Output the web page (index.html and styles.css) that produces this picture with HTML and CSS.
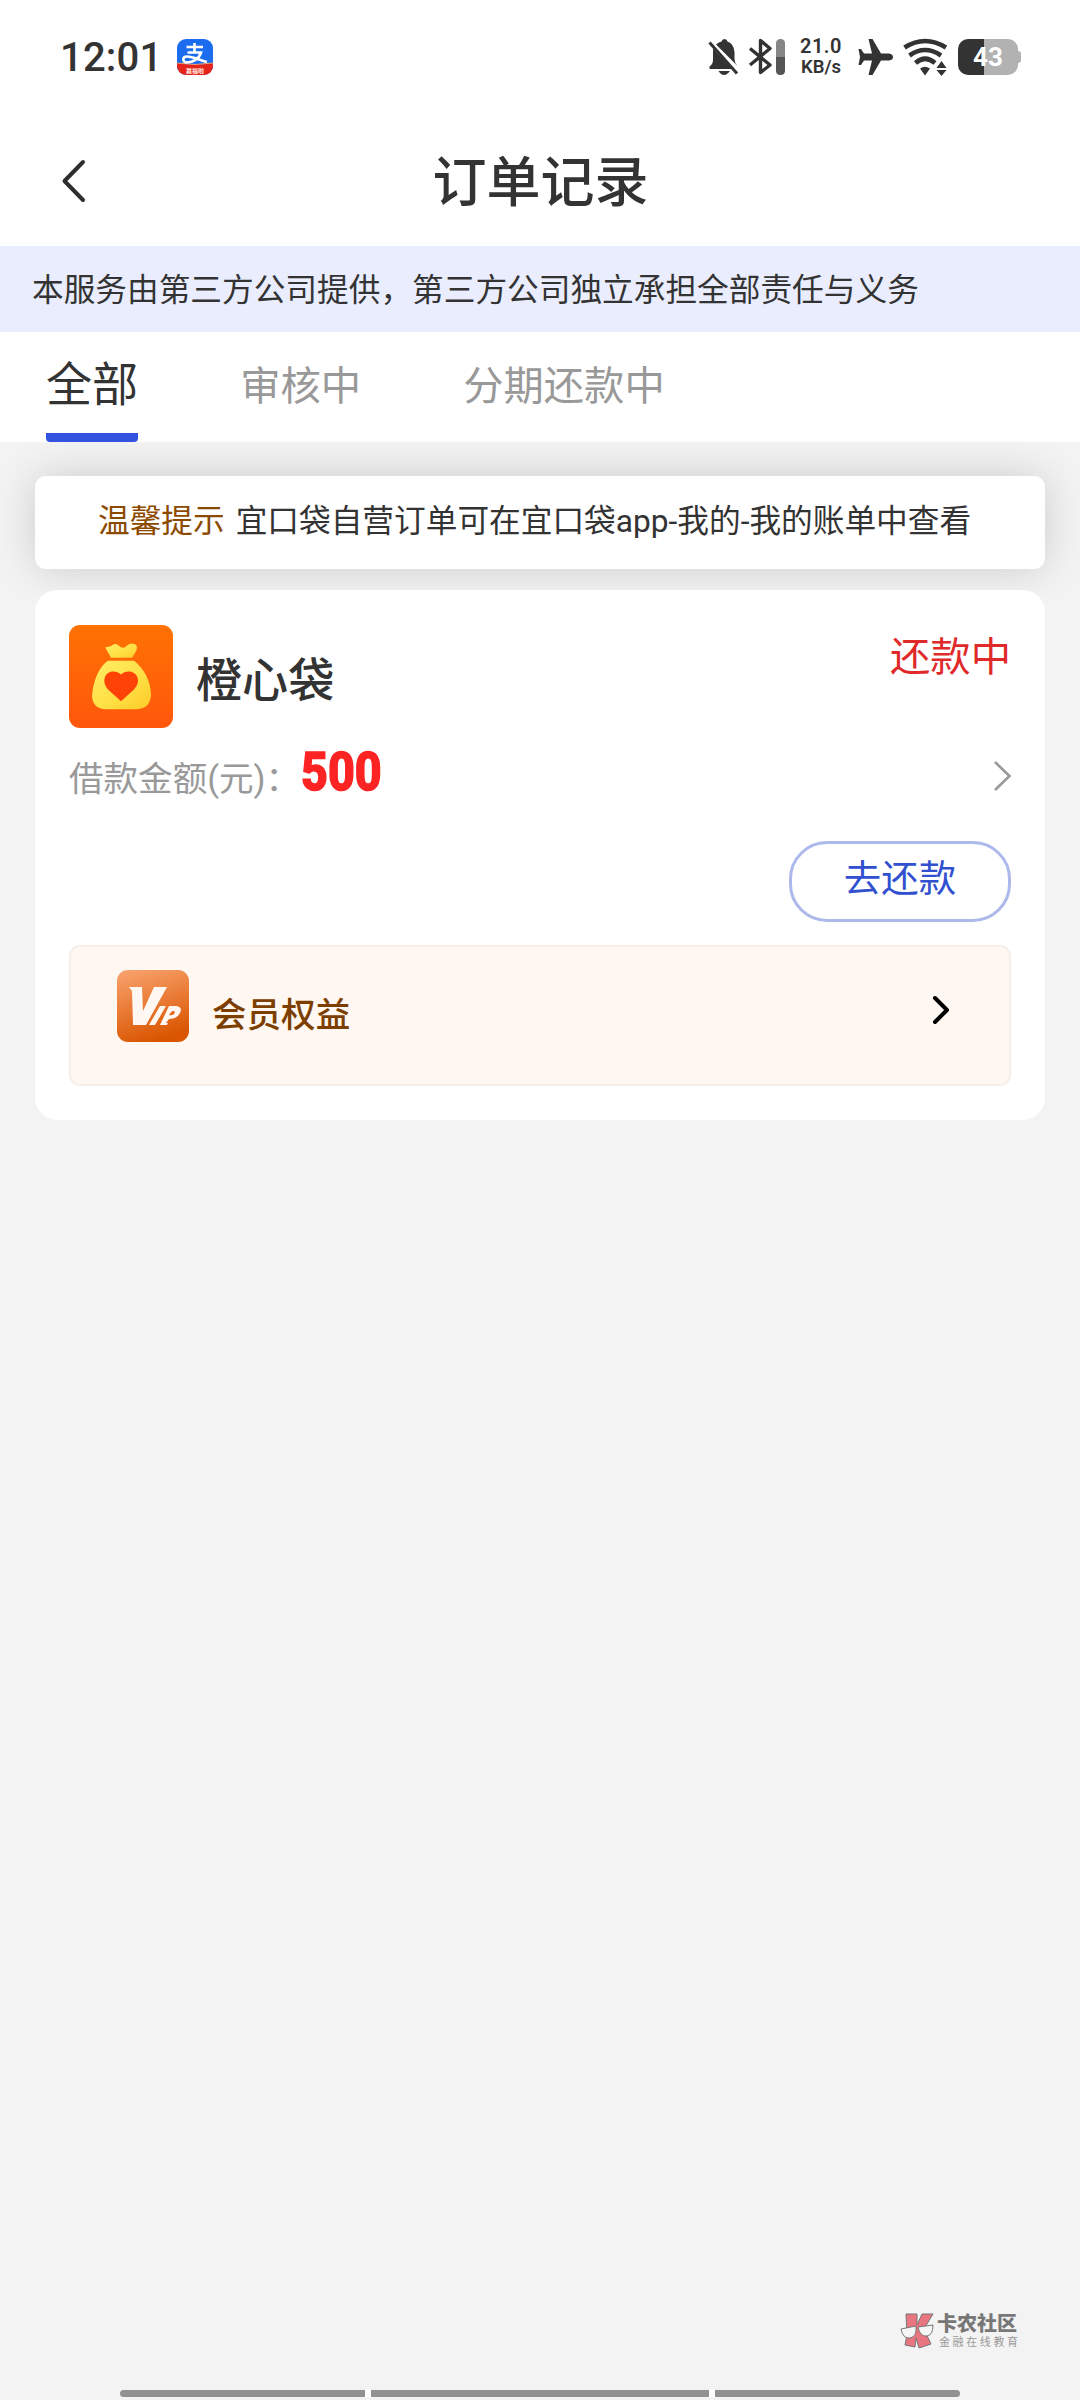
FILE: index.html
```html
<!DOCTYPE html>
<html lang="zh-CN">
<head>
<meta charset="utf-8">
<title>订单记录</title>
<link rel="stylesheet" href="styles.css">
</head>
<body>
<header class="status">
  <span class="clock">12:01</span>
  <svg class="app-badge" width="36" height="36" viewBox="0 0 36 36">
    <defs><clipPath id="badge"><rect width="36" height="36" rx="9"/></clipPath></defs>
    <g clip-path="url(#badge)">
      <rect width="36" height="36" fill="#1c6cf0"/>
      <path d="M0 24 Q18 27 36 24 V36 H0Z" fill="#e6241c"/>
      <path d="M0 24 Q18 27 36 24" fill="none" stroke="#f3a06a" stroke-width="1"/>
      <path d="M9.500 8H26M17.500 4V13M10.500 13.500H24C22 20 16 23.500 10 23.500C5 23.500 5 17.500 10 17.500C16 17.500 22 21 30 23" fill="none" stroke="#fff" stroke-width="2.600"/>
    </g>
    <text x="18" y="33.500" class="badge-text">赢福啦</text>
  </svg>
  <div class="status-icons">
    <svg width="32" height="38" viewBox="0 0 32 38" fill="#333">
      <path d="M8 6.500Q11 4 13.500 3.500Q14 1 16.500 1Q19 1 19.500 3.500Q26 6 26.500 14V21Q26.500 25 29.500 28ZM5 10.500L24 31H1.500V28.500Q5 26 5 22ZM10.500 33H22Q19 37 16 37Q13 37 10.500 33Z"/>
      <path d="M1.500 4.500L29 35.500" stroke="#333" stroke-width="3"/>
    </svg>
    <svg class="bluetooth" width="38" height="38" viewBox="0 0 38 38">
      <path d="M2 10.500L22 27L12.500 34.500V2.500L22 10.500L2 27" fill="none" stroke="#333" stroke-width="3.400" stroke-linejoin="round"/>
      <path d="M28 5.500Q28 1 32.500 1Q37 1 37 5.500V19H28Z" fill="#858585"/>
      <path d="M28 19H37V32.500Q37 37 32.500 37Q28 37 28 32.500Z" fill="#555"/>
    </svg>
    <div class="speed"><span>21.0</span><span>KB/s</span></div>
    <svg class="plane" width="36" height="38" viewBox="0 0 36 38">
      <path d="M11.500 1H15.500L24 15.500H32Q36 16 36 19Q36 22 32 22.500H24L15.500 37H11.500L15 22.500H7L4 27H1.500L3 19L1.500 11H4L7 15.500H15Z" fill="#333"/>
    </svg>
    <svg class="wifi" width="45" height="38" viewBox="0 0 45 38">
      <g fill="none" stroke="#333" stroke-width="4.600">
        <path d="M1.500 9.500Q22 -3.500 43 9.500"/><path d="M6.500 17.500Q22 6.500 38 17.500"/><path d="M12.500 25Q22 16.500 32 25"/>
      </g>
      <path d="M17 30.500Q22 27 27 30.500L22 37.500ZM33.500 30L38.500 23L43.500 30ZM33.500 32H43.500L38.500 38Z" fill="#333"/>
    </svg>
    <div class="battery"><span>43</span></div>
  </div>
</header>
<nav class="titlebar">
  <svg width="30" height="44" viewBox="0 0 30 44"><path d="M25 3L6.500 22L25 41" fill="none" stroke="#2e2e2e" stroke-width="4" stroke-linecap="round" stroke-linejoin="round"/></svg>
  <h1>订单记录</h1>
</nav>
<p class="notice">本服务由第三方公司提供，第三方公司独立承担全部责任与义务</p>
<div class="tabs">
  <span class="tab active">全部</span>
  <span class="tab">审核中</span>
  <span class="tab">分期还款中</span>
</div>
<main class="content">
  <section class="tip"><b>温馨提示</b><span>宜口袋自营订单可在宜口袋app-我的-我的账单中查看</span></section>
  <article class="order">
    <div class="order-head">
      <svg width="104" height="103" viewBox="0 0 104 104" preserveAspectRatio="none">
        <defs>
          <linearGradient id="orange" x2="0" y2="1"><stop stop-color="#ff7203"/><stop offset="1" stop-color="#ff570c"/></linearGradient>
          <linearGradient id="gold" x1="0" x2="1" y1="0" y2="1"><stop stop-color="#ffec66"/><stop offset=".6" stop-color="#ffdf42"/><stop offset="1" stop-color="#ffc928"/></linearGradient>
        </defs>
        <rect width="104" height="104" rx="11" fill="url(#orange)"/>
        <path d="M42 33L37 24Q35 22 39 22Q42 22 44 20Q47 18 50 21Q53 24 56 22.500Q59 20 61 19Q68 18 68 23Q68 26 63 33Z" fill="url(#gold)"/>
        <path d="M39 36H65C74 43 82 56 82 71Q81 85 67 85H37Q24 85 23 72C24 55 31 41 39 36Z" fill="url(#gold)"/>
        <path d="M52 77L39 65C32 57 36 47 44 47Q49 47 52 50Q55 47 60 47C68 47 73 57 65 65Z" fill="#ff4206"/>
      </svg>
      <h2>橙心袋</h2>
      <span class="state">还款中</span>
    </div>
    <div class="amount">
      <span class="label">借款金额(元)：</span><strong>500</strong>
      <svg width="20" height="32" viewBox="0 0 20 32"><path d="M3 2L17.500 16L3 30" fill="none" stroke="#999" stroke-width="2.600"/></svg>
    </div>
    <div class="actions"><button class="repay">去还款</button></div>
    <div class="vip">
      <svg width="72" height="72" viewBox="0 0 72 72">
        <defs><linearGradient id="copper" x1=".2" x2=".5" y2="1"><stop stop-color="#f8a06a"/><stop offset="1" stop-color="#d95500"/></linearGradient></defs>
        <rect width="72" height="72" rx="11" fill="url(#copper)"/>
        <path d="M12 17H25L26 41L37 17H50L29 55H16L15 21Z" fill="#fff8f2"/>
        <path d="M43 36H49L38 55H32ZM52 36H59Q66 37 63 43Q60 49 52 49L49 53H51L50 55H43ZM55 41L52 45Q57 46 58 42Q58 41 55 41Z" fill="#fff8f2" fill-rule="evenodd"/>
      </svg>
      <span>会员权益</span>
      <svg class="vip-arrow" width="20" height="30" viewBox="0 0 20 30"><path d="M4 3L16 15L4 27" fill="none" stroke="#000" stroke-width="4" stroke-linecap="round" stroke-linejoin="round"/></svg>
    </div>
  </article>
</main>
<div class="watermark">
  <svg width="34" height="36" viewBox="0 0 34 36">
    <path d="M6 1H17V12L22 1H33L24 16L31 31L19 35L16 25L15 34L5 32L7 22Z" fill="#e97580" stroke="#777" stroke-width="1"/>
    <path d="M1 16L16 13Q17 24 10 25Q3 26 1 16ZM18 14L33 12Q33 22 27 23Q20 24 18 14Z" fill="#f6f6f6" stroke="#777" stroke-width="1"/>
  </svg>
  <div class="brand"><b>卡农社区</b><span>金融在线教育</span></div>
</div>
<div class="gesture"><i></i><i></i><i></i></div>
</body>
</html>
```
FILE: styles.css
```css
* { box-sizing: border-box; margin: 0; padding: 0; }
body {
  position: relative;
  width: 1080px;
  height: 2400px;
  overflow: hidden;
  background: #f3f3f3;
  color: #333;
  font-family: Roboto, "Noto Sans CJK SC", sans-serif;
}
svg { display: block; flex: none; }

.status {
  display: flex;
  align-items: center;
  height: 112px;
  padding: 2px 59px 0 60px;
  background: #fff;
}
.clock { width: 117px; font-size: 40px; font-weight: 500; letter-spacing: .2px; }
.badge-text { fill: #ffe4dc; font: 700 6px "Noto Sans CJK SC", sans-serif; text-anchor: middle; }
.status-icons { display: flex; align-items: center; margin-left: auto; }
.bluetooth { margin-left: 8px; }
.speed {
  display: flex;
  flex-direction: column;
  align-items: center;
  width: 44px;
  margin-left: 13px;
  font-size: 20px;
  font-weight: 600;
  line-height: 21px;
}
.speed span:first-child { letter-spacing: .5px; }
.speed span:last-child { font-size: 18.500px; }
.plane { margin-left: 14px; }
.wifi { margin-left: 10px; }
.battery {
  position: relative;
  width: 60px;
  height: 36px;
  margin: 0 3px 0 10px;
  border-radius: 10px;
  background: linear-gradient(90deg, #333 43%, #b2b2b2 43%);
  color: #fff;
  font-size: 26px;
  font-weight: 700;
  line-height: 36px;
  text-align: center;
}
.battery::after {
  content: "";
  position: absolute;
  top: 12px;
  right: -3px;
  width: 3px;
  height: 12px;
  border-radius: 0 3px 3px 0;
  background: #b2b2b2;
}

.titlebar {
  display: grid;
  grid-template-columns: 1fr auto 1fr;
  align-items: center;
  height: 134px;
  padding: 4px 58px 0;
  background: #fff;
}
.titlebar h1 { padding: 5px 0 0 1px; font-size: 54px; font-weight: 500; line-height: 80px; }

.notice {
  height: 86px;
  padding-left: 32px;
  background: #eaedfd;
  font-size: 31.68px;
  line-height: 90px;
}

.tabs {
  display: flex;
  gap: 102px;
  height: 110px;
  padding-left: 46px;
  background: #fff;
}
.tab { color: #999; font-size: 40.32px; line-height: 109px; }
.tab.active {
  background: linear-gradient(#3452e0, #3452e0) bottom / 100% 9px no-repeat;
  border-radius: 4px;
  color: #333;
  font-size: 46.08px;
  line-height: 106px;
}

.content { padding: 34px 35px 0; }
.tip {
  display: flex;
  gap: 11px;
  height: 93px;
  padding-left: 63px;
  border-radius: 11px;
  background: #fff;
  box-shadow: 0 0 43px rgba(0, 0, 0, .16);
  font-size: 31.68px;
  line-height: 91px;
  white-space: nowrap;
}
.tip b { color: #8c4a00; font-weight: 400; }

.order {
  position: relative;
  height: 530px;
  margin-top: 21px;
  padding: 35px 34px 34px;
  border-radius: 22px;
  background: #fff;
}
.order-head { display: flex; align-items: center; height: 103px; }
.order-head h2 { margin-left: 23px; font-size: 46.08px; font-weight: 500; }
.state {
  align-self: flex-start;
  margin-left: auto;
  color: #e02a2a;
  font-size: 40.32px;
  line-height: 66px;
}
.amount { display: flex; align-items: center; height: 96px; }
.label { width: 232px; color: #999; font-size: 34.56px; white-space: nowrap; }
.amount strong {
  padding-bottom: 9px;
  color: #fc2323;
  font-size: 53px;
  font-weight: 800;
  line-height: 60px;
  transform: scaleX(.88);
  transform-origin: left;
  -webkit-text-stroke: 1.500px #fc2323;
}
.amount svg { margin-left: auto; margin-right: -1px; }
.actions { display: flex; justify-content: flex-end; height: 121px; padding-top: 17px; }
.repay {
  width: 222px;
  height: 81px;
  padding-bottom: 4px;
  border: 3px solid #adb9ea;
  border-radius: 38px;
  background: #fff;
  color: #3150d0;
  font: 37.44px/71px Roboto, "Noto Sans CJK SC", sans-serif;
}
.vip {
  display: flex;
  align-items: center;
  height: 141px;
  padding: 0 58px 20px 46px;
  border: 2px solid #f7eee7;
  border-radius: 11px;
  background: #fff7f1;
}
.vip span { margin-left: 23px; padding-top: 12px; color: #7d3f00; font-size: 34.56px; font-weight: 500; }
.vip-arrow { margin-left: auto; margin-top: 8px; }

.watermark { position: absolute; left: 900px; top: 2313px; display: flex; gap: 3px; color: #777; }
.brand { display: flex; flex-direction: column; white-space: nowrap; }
.brand b { font-size: 20px; font-weight: 900; line-height: 23px; }
.brand span { padding-left: 2px; color: #999; font-size: 11px; letter-spacing: 2.600px; line-height: 13px; }

.gesture {
  position: absolute;
  left: 120px;
  top: 2390px;
  display: grid;
  grid-template-columns: 245px 338px 245px;
  gap: 6px;
  overflow: hidden;
  height: 7px;
  border-radius: 4px;
  background: #fff;
}
.gesture i { background: #919191; }
```
